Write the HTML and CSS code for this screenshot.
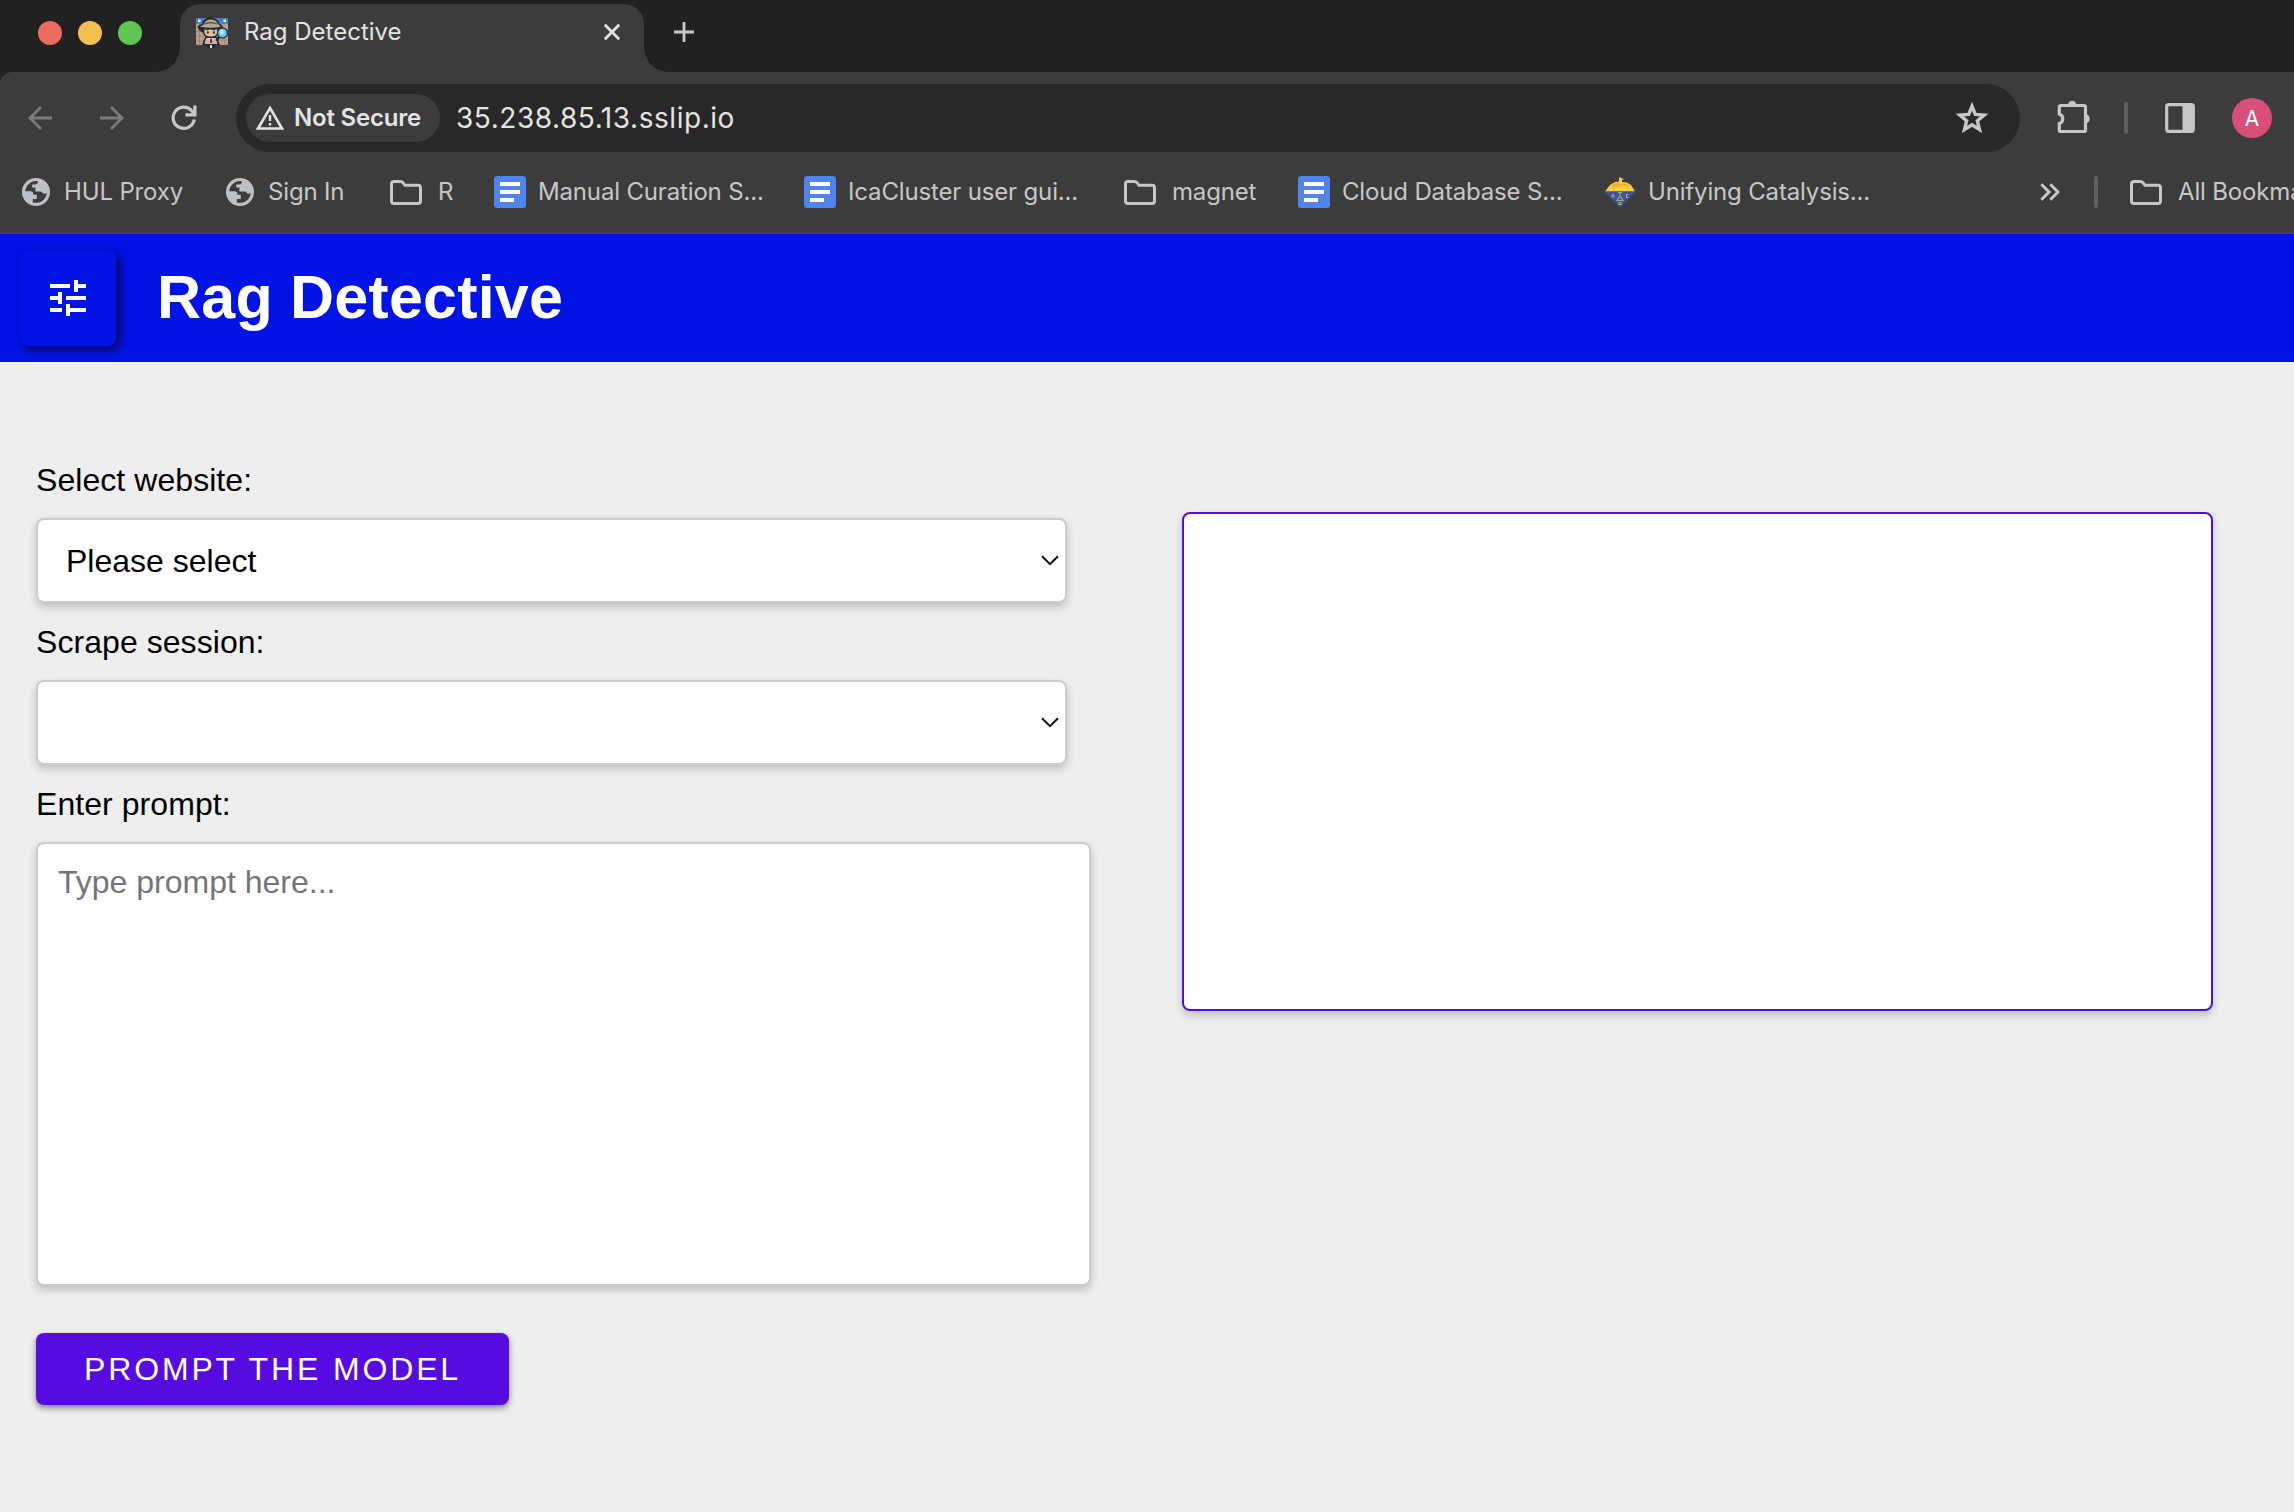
FILE: index.html
```html
<!DOCTYPE html>
<html lang="en">
<head>
<meta charset="utf-8">
<title>Rag Detective</title>
<link rel="stylesheet" href="styles.css">
</head>
<body>
<svg class="defs" aria-hidden="true">
  <symbol id="globe" viewBox="0 0 28 28">
    <circle cx="14" cy="14" r="14" fill="#bdc1c6"/>
    <path d="M16 3.3A10.9 10.9 0 0 0 3.2 13.2H8.2C10.8 13.2 11.6 14.6 11.4 16.8H14.8V21H10.8V24.4A10.9 10.9 0 0 0 24.8 14.8C23.4 16.2 21.6 15.9 20.2 14.4L19.4 13.4H13.4V9.6H10.2V6.4H13.6C15.4 6.2 16 5 16 3.3Z" fill="#3c3c3c"/>
  </symbol>
  <symbol id="folder" viewBox="0 0 32 25">
    <path d="M1.5 4Q1.5 1.5 4 1.5H10.5Q12 1.5 13 2.7L15 5.3H28Q30.5 5.3 30.5 7.8V21Q30.5 23.5 28 23.5H4Q1.5 23.5 1.5 21Z" fill="none" stroke="#c7c7c7" stroke-width="3"/>
  </symbol>
  <symbol id="doc" viewBox="0 0 32 32">
    <rect width="32" height="32" rx="3.5" fill="#5084ee"/>
    <path d="M6 6H26V10H6ZM6 14H26V18H6ZM6 22H20V26H6Z" fill="#fff"/>
  </symbol>
</svg>

<div class="browser">
  <div class="tabstrip">
    <div class="lights"><i class="red"></i><i class="amber"></i><i class="green"></i></div>
    <div class="tab">
      <svg class="favicon" viewBox="0 0 32 34">
        <rect y="3" width="32" height="27" rx="1.5" fill="#b79f89"/>
        <path d="M0 5Q0 3 2 3H30Q32 3 32 5V9H0Z" fill="#3f7fd6"/>
        <path d="M2 4.500H4.500V7H2ZM27.500 4.500H30V7H27.500Z" fill="#e8f4ff"/>
        <path d="M0 16H8M0 21H8M0 26H8M24 25H32M3.500 9V30M29 23V30" stroke="#97816d" stroke-width=".8"/>
        <path d="M1.500 12.500Q2 9.500 6 9Q7 4 12 3L14.500 1L17 3Q22.500 4 23.500 9Q27 10 27 12.500Q25 14.500 22 14L22.500 18Q22 23 15 23Q8 23 7 18L4 16Z" fill="#222a32"/>
        <path d="M4 11.700Q8 10 8.500 8Q10 4.500 14.500 4.500Q20 4.500 21.500 8Q23 10.500 25 11.700Q15 14 4 11.700Z" fill="#b8a693"/>
        <path d="M8.500 8.800Q15 6.800 21.500 8.800" fill="none" stroke="#65584c" stroke-width="1.400"/>
        <path d="M8.500 14.200H21.200V18Q20 21.500 15 21.500Q9.500 21.500 8.500 18Z" fill="#eac09a"/>
        <path d="M8.500 14.200L11 15.500L14 14.500L18 15.500L21.200 14.200Z" fill="#222a32"/>
        <ellipse cx="11.800" cy="17.500" rx="1" ry="1.300" fill="#222a32"/><ellipse cx="18" cy="17.500" rx="1" ry="1.300" fill="#222a32"/>
        <path d="M9 22H21L24 30H6Z" fill="#222a32"/>
        <path d="M10 23H20L21.500 29H8.500Z" fill="#c9b6a3"/>
        <path d="M12 23H18L15 26Z" fill="#eee"/><path d="M14.200 23.500H16L16.200 28H14Z" fill="#8c2834"/>
        <path d="M10.500 29H19.500V32.500H10.500Z" fill="#222a32"/><path d="M14 30H16V33H14Z" fill="#dcdcdc"/>
        <path d="M23 22L20.500 26" stroke="#222a32" stroke-width="2.500"/>
        <circle cx="26.500" cy="18" r="5" fill="#6cc8f5" stroke="#263f57" stroke-width="1.500"/>
        <circle cx="25.800" cy="17" r="2.200" fill="#b9eaff"/>
      </svg>
      <span class="tab-title">Rag Detective</span>
      <svg class="close" viewBox="0 0 18 18"><path d="M1.8 1.8L16.2 16.2M16.2 1.8L1.8 16.2" stroke="#e3e3e3" stroke-width="2.8"/></svg>
    </div>
    <svg class="plus" viewBox="0 0 20 20"><path d="M10 0V20M0 10H20" stroke="#c7c7c7" stroke-width="2.8"/></svg>
  </div>

  <div class="toolbar">
    <svg class="back" viewBox="0 0 24 24"><path d="M24 12H2M13 1L2 12L13 23" fill="none" stroke="#7b7b7b" stroke-width="2.8"/></svg>
    <svg class="forward" viewBox="0 0 24 24"><path d="M0 12H22M11 1L22 12L11 23" fill="none" stroke="#7b7b7b" stroke-width="2.8"/></svg>
    <svg class="reload" viewBox="0 0 26 26"><path d="M23.2 14.500A10.600 10.600 0 1 1 20.700 5.800L23 8.500" fill="none" stroke="#c7c7c7" stroke-width="3.200"/><path d="M25.500 .5V11.500H14.500V8.200H22.300V.5Z" fill="#c7c7c7"/></svg>
    <div class="omnibox">
      <div class="chip">
        <svg class="warn" viewBox="0 0 30 26"><path d="M15 3L27 23.5H3Z" fill="none" stroke="#e3e3e3" stroke-width="2.6"/><path d="M15 10V16M15 18V20.4" stroke="#e3e3e3" stroke-width="2.4"/></svg>
        <span>Not Secure</span>
      </div>
      <span class="url">35.238.85.13.sslip.io</span>
      <svg class="star" viewBox="0 0 34 32"><path d="M17 4.2L20.3 12.4L29.2 13.1L22.4 18.8L24.5 27.5L17 22.8L9.5 27.5L11.6 18.8L4.8 13.1L13.7 12.4Z" fill="none" stroke="#c7c7c7" stroke-width="3.4"/></svg>
    </div>
    <svg class="puzzle" viewBox="0 0 34 34"><path d="M3 5.5H27Q28.5 5.5 28.5 7V30Q28.5 31.5 27 31.5H4Q2.3 31.5 2.3 30V23.5A5 5 0 0 0 2.3 14V7Q2.3 5.5 4 5.5" fill="none" stroke="#c7c7c7" stroke-width="3.200"/><path d="M10.8 5A4.3 4.3 0 0 1 19.4 5ZM29 14.2A4.6 4.6 0 0 1 29 23.2Z" fill="#c7c7c7"/></svg>
    <i class="divider"></i>
    <svg class="panel" viewBox="0 0 30 30"><rect x="1.7" y="1.7" width="26.6" height="26.6" rx="2" fill="none" stroke="#c7c7c7" stroke-width="3.2"/><path d="M17.5 1H28V29H17.5Z" fill="#c7c7c7"/></svg>
    <span class="avatar">A</span>
  </div>

  <div class="bookmarks">
    <div class="bm b1"><svg class="globe"><use href="#globe"/></svg><span>HUL Proxy</span></div>
    <div class="bm b2"><svg class="globe"><use href="#globe"/></svg><span>Sign In</span></div>
    <div class="bm b3"><svg class="folder"><use href="#folder"/></svg><span>R</span></div>
    <div class="bm b4"><svg class="doc"><use href="#doc"/></svg><span>Manual Curation S...</span></div>
    <div class="bm b5"><svg class="doc"><use href="#doc"/></svg><span>IcaCluster user gui...</span></div>
    <div class="bm b6"><svg class="folder"><use href="#folder"/></svg><span>magnet</span></div>
    <div class="bm b7"><svg class="doc"><use href="#doc"/></svg><span>Cloud Database S...</span></div>
    <div class="bm b8"><svg class="acs" viewBox="0 0 32 32"><path d="M1 15.500L6 9L11 6L15 5.500V1L17 2L20 3L18 4V6L23 6.500L27 9L31 15.500Z" fill="#f8cf38"/><path d="M8 9L12 6.500L17 8L22 7.500L26 11L18 10L9 12Z" fill="#eab234"/><path d="M0 15.500H32L16 31.500Z" fill="#3b559f"/><path d="M14 16.500H18M16 17V20L13 24.500H19L16 20M7.500 21.500L9 18.500L10.500 21.500M24.500 18.500H22.500V21.500H24.500M15 26.500H17V28.500H15Z" fill="none" stroke="#b5a55a" stroke-width="1.100"/></svg><span>Unifying Catalysis...</span></div>
    <svg class="more" viewBox="0 0 20 18"><path d="M1.300 1.300L9 9L1.300 16.700M10.300 1.300L18 9L10.300 16.700" fill="none" stroke="#c7c7c7" stroke-width="3"/></svg>
    <i class="divider"></i>
    <div class="bm all"><svg class="folder"><use href="#folder"/></svg><span>All Bookmarks</span></div>
  </div>
</div>

<header class="appbar">
  <button class="menu" aria-label="Settings"><svg viewBox="3 3 18 18"><path d="M3 17v2h6v-2H3zM3 5v2h10V5H3zm10 16v-2h8v-2h-8v-2h-2v6h2zM7 9v2H3v2h4v2h2V9H7zm14 4v-2H11v2h10zm-6-4h2V7h4V5h-4V3h-2v6z" fill="#fff"/></svg></button>
  <h1>Rag Detective</h1>
</header>

<main class="content">
  <form class="form">
    <label for="site">Select website:</label>
    <div class="select"><select id="site"><option>Please select</option></select><svg viewBox="0 0 18 11"><path d="M1 1.200L9 9.200L17 1.200" fill="none" stroke="#111" stroke-width="2"/></svg></div>
    <label for="session">Scrape session:</label>
    <div class="select"><select id="session"></select><svg viewBox="0 0 18 11"><path d="M1 1.200L9 9.200L17 1.200" fill="none" stroke="#111" stroke-width="2"/></svg></div>
    <label for="prompt">Enter prompt:</label>
    <textarea id="prompt" placeholder="Type prompt here..."></textarea>
    <button class="submit" type="button">PROMPT THE MODEL</button>
  </form>
  <section class="answer"></section>
</main>
</body>
</html>
```
FILE: styles.css
```css
* { box-sizing: border-box; }
body {
  margin: 0;
  width: 2294px;
  height: 1512px;
  overflow: hidden;
  background: #eee;
  font-family: "Liberation Sans", Arial, sans-serif;
  color: #000;
}
svg { display: block; flex: none; }
.defs { display: none; }

/* browser chrome */
.browser {
  height: 234px;
  overflow: hidden;
  background: #202221;
  border-bottom: 2px solid #484848;
  font-family: Inter, "Noto Sans", sans-serif;
  font-size: 24px;
  color: #c7c7c7;
  white-space: nowrap;
}
.tabstrip { display: flex; height: 72px; padding-left: 38px; }
.lights { display: flex; gap: 16px; width: 142px; padding-top: 21px; }
.lights i { width: 24px; height: 24px; border-radius: 50%; }
.red { background: #ed6a5e; }
.amber { background: #f5bf4f; }
.green { background: #61c554; }
.tab {
  position: relative;
  display: flex;
  width: 464px;
  height: 68px;
  margin-top: 4px;
  padding-left: 16px;
  border-radius: 20px 20px 0 0;
  background: #3c3c3c;
  color: #e3e3e3;
}
.tab::before, .tab::after {
  content: "";
  position: absolute;
  bottom: 0;
  width: 24px;
  height: 24px;
}
.tab::before { left: -24px; background: radial-gradient(circle at 0 0, transparent 23.500px, #3c3c3c 24px); }
.tab::after { right: -24px; background: radial-gradient(circle at 100% 0, transparent 23.500px, #3c3c3c 24px); }
.favicon { width: 32px; height: 34px; margin-top: 11px; }
.tab-title { width: 360px; margin-left: 16px; line-height: 56px; }
.close { width: 18px; height: 18px; margin: 19px 0 0 -1px; }
.plus { width: 20px; height: 20px; margin: 22px 0 0 30px; }

.toolbar {
  display: flex;
  align-items: center;
  height: 92px;
  padding: 0 0 0 28px;
  border-top-left-radius: 12px;
  background: #3c3c3c;
}
.back { width: 24px; height: 24px; }
.forward { width: 24px; height: 24px; margin-left: 48px; }
.reload { width: 26px; height: 26px; margin-left: 47px; }
.omnibox {
  display: flex;
  align-items: center;
  width: 1784px;
  height: 68px;
  margin-left: 39px;
  padding-left: 10px;
  border-radius: 34px;
  background: #282828;
}
.chip {
  display: flex;
  align-items: center;
  width: 194px;
  height: 48px;
  padding-left: 9px;
  border-radius: 24px;
  background: #3c3c3c;
  color: #e3e3e3;
  font-weight: 600;
  letter-spacing: -.2px;
}
.chip span { margin: -2px 0 0 9px; }
.warn { width: 30px; height: 26px; }
.url { width: 1497px; margin-left: 16px; font-size: 28px; letter-spacing: .55px; color: #e3e3e3; }
.star { width: 34px; height: 32px; margin-left: 2px; }
.puzzle { width: 34px; height: 34px; margin: 0 0 3px 37px; }
.divider { width: 4px; height: 32px; border-radius: 2px; background: #5f5f5f; }
.toolbar .divider { margin-left: 33px; }
.panel { width: 30px; height: 30px; margin-left: 37px; }
.avatar {
  flex: none;
  width: 40px;
  height: 40px;
  margin-left: 37px;
  border-radius: 50%;
  background: #d94f7a;
  color: #fff;
  font-size: 21px;
  line-height: 41px;
  text-align: center;
}

.bookmarks { display: flex; align-items: center; height: 70px; padding: 0 0 14px 22px; background: #3c3c3c; letter-spacing: -.16px; }
.bm { display: flex; align-items: center; flex: none; }
.bm span { margin-top: -2px; }
.globe { width: 28px; height: 28px; margin-right: 14px; }
.folder { width: 32px; height: 25px; margin-right: 16px; }
.doc { width: 32px; height: 32px; margin-right: 12px; }
.acs { width: 32px; height: 32px; margin-right: 12px; }
.b1 { width: 204px; }
.b2 { width: 164px; }
.b3 { width: 104px; }
.b4 { width: 310px; }
.b5 { width: 320px; }
.b6 { width: 174px; }
.b7 { width: 306px; }
.b8 { width: 436px; }
.more { width: 20px; height: 18px; }
.bookmarks .divider { flex: none; margin: 0 32px 0 34px; }

/* application */
.appbar { display: flex; align-items: center; height: 128px; padding-left: 20px; background: #0213e8; }
.menu {
  display: flex;
  align-items: center;
  justify-content: center;
  width: 96px;
  height: 96px;
  padding: 0;
  border: 0;
  border-radius: 8px;
  background: #0213e8;
  box-shadow: 4px 4px 10px rgba(0, 0, 0, .6);
}
.menu svg { width: 36px; height: 36px; }
h1 { margin: -2px 0 0 41px; font-size: 61px; line-height: 70px; color: #fff; letter-spacing: .2px; }

.content { display: flex; align-items: flex-start; padding: 92px 0 0 36px; }
.form { display: flex; flex-direction: column; width: 1056px; font-size: 32px; }
.form label { height: 64px; line-height: 52px; letter-spacing: .06px; }
.select { position: relative; width: 1031px; height: 85px; margin-bottom: 13px; }
.select select {
  width: 100%;
  height: 100%;
  padding: 0 28px;
  appearance: none;
  font: inherit;
  color: #000;
}
.select svg { position: absolute; right: 8px; top: 37px; width: 18px; height: 11px; }
.select select, textarea {
  border: 2px solid #ccc;
  border-radius: 8px;
  background: #fff;
  box-shadow: 0 4px 8px rgba(0, 0, 0, .2);
}
textarea {
  width: 1055px;
  height: 444px;
  padding: 20px;
  resize: none;
  font: inherit;
}
textarea::placeholder { color: #757575; }
.submit {
  width: 473px;
  height: 72px;
  margin-top: 47px;
  padding: 0;
  border: 0;
  border-radius: 8px;
  background: #560be1;
  box-shadow: 0 3px 6px rgba(0, 0, 0, .45);
  font: inherit;
  letter-spacing: 2.860px;
  color: #fff;
}
.answer {
  width: 1031px;
  height: 499px;
  margin: 58px 0 0 90px;
  border: 2px solid #560be1;
  border-radius: 8px;
  background: #fff;
  box-shadow: 0 4px 8px rgba(0, 0, 0, .2);
}
```
